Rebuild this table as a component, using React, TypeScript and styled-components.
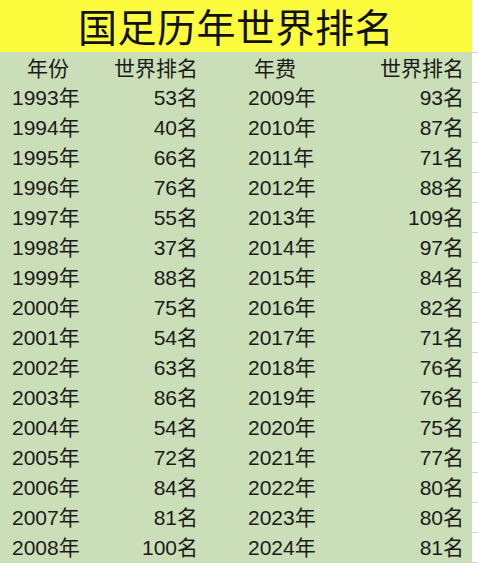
import React from 'react';
import styled, { createGlobalStyle } from 'styled-components';

const GlobalStyle = createGlobalStyle`
  html, body {
    margin: 0;
    padding: 0;
    background: #ffffff;
  }
  body {
    font-family: "Liberation Sans", "Noto Sans CJK SC", sans-serif;
    color: #1b1b1b;
  }
`;

type Row = { year: number; rank: number };

const leftRows: Row[] = [
  { year: 1993, rank: 53 },
  { year: 1994, rank: 40 },
  { year: 1995, rank: 66 },
  { year: 1996, rank: 76 },
  { year: 1997, rank: 55 },
  { year: 1998, rank: 37 },
  { year: 1999, rank: 88 },
  { year: 2000, rank: 75 },
  { year: 2001, rank: 54 },
  { year: 2002, rank: 63 },
  { year: 2003, rank: 86 },
  { year: 2004, rank: 54 },
  { year: 2005, rank: 72 },
  { year: 2006, rank: 84 },
  { year: 2007, rank: 81 },
  { year: 2008, rank: 100 },
];

const rightRows: Row[] = [
  { year: 2009, rank: 93 },
  { year: 2010, rank: 87 },
  { year: 2011, rank: 71 },
  { year: 2012, rank: 88 },
  { year: 2013, rank: 109 },
  { year: 2014, rank: 97 },
  { year: 2015, rank: 84 },
  { year: 2016, rank: 82 },
  { year: 2017, rank: 71 },
  { year: 2018, rank: 76 },
  { year: 2019, rank: 76 },
  { year: 2020, rank: 75 },
  { year: 2021, rank: 77 },
  { year: 2022, rank: 80 },
  { year: 2023, rank: 80 },
  { year: 2024, rank: 81 },
];

const Page = styled.div`
  display: flex;
  width: 478px;
  height: 563px;
  overflow: hidden;
`;

const Sheet = styled.div`
  width: 472px;
  display: flex;
  flex-direction: column;
`;

const Gutter = styled.div`
  flex: 1;
  display: flex;
  flex-direction: column;
  background: #ffffff;
`;

const GutterCell = styled.div<{ $h: number }>`
  height: ${(p) => p.$h}px;
  flex-shrink: 0;
  box-sizing: border-box;
  border-bottom: 1px solid #d6d6d6;
`;

const Title = styled.div`
  height: 52px;
  background: #fdfb3d;
  display: flex;
  align-items: center;
  justify-content: center;
  font-family: "Noto Sans CJK SC", sans-serif;
  font-size: 39px;
  font-weight: 400;
  line-height: 1;
  color: #111111;
  letter-spacing: 0.5px;
  padding-bottom: 1px;
  box-sizing: border-box;
`;

const Table = styled.div`
  flex: 1;
  background: #cadfb8;
  display: grid;
  grid-template-columns: 96px 109px 140px 127px;
  grid-auto-rows: 30px;
`;

const Cell = styled.div<{ $align: 'left' | 'right' | 'center'; $pad?: number }>`
  display: flex;
  align-items: center;
  justify-content: ${(p) =>
    p.$align === 'left' ? 'flex-start' : p.$align === 'right' ? 'flex-end' : 'center'};
  padding-left: ${(p) => (p.$align === 'left' ? p.$pad ?? 0 : 0)}px;
  padding-right: ${(p) => (p.$align === 'right' ? p.$pad ?? 0 : 0)}px;
  font-size: 21px;
  white-space: nowrap;
  line-height: 1;
`;

const HeadCell = styled(Cell)`
  font-family: "Noto Sans CJK SC", sans-serif;
  font-size: 21px;
`;

export default function App() {
  const rows = leftRows.map((l, i) => ({ l, r: rightRows[i] }));
  return (
    <>
      <GlobalStyle />
      <Page>
        <Sheet>
          <Title>国足历年世界排名</Title>
          <Table>
            <HeadCell $align="center">年份</HeadCell>
            <HeadCell $align="right" $pad={7}>世界排名</HeadCell>
            <HeadCell $align="center">年费</HeadCell>
            <HeadCell $align="right" $pad={8}>世界排名</HeadCell>
            {rows.map(({ l, r }) => (
              <React.Fragment key={l.year}>
                <Cell $align="left" $pad={12}>{l.year}年</Cell>
                <Cell $align="right" $pad={7}>{l.rank}名</Cell>
                <Cell $align="left" $pad={43}>{r.year}年</Cell>
                <Cell $align="right" $pad={8}>{r.rank}名</Cell>
              </React.Fragment>
            ))}
          </Table>
        </Sheet>
        <Gutter>
          <GutterCell $h={53} />
          {Array.from({ length: 17 }).map((_, i) => (
            <GutterCell key={i} $h={30} />
          ))}
        </Gutter>
      </Page>
    </>
  );
}
